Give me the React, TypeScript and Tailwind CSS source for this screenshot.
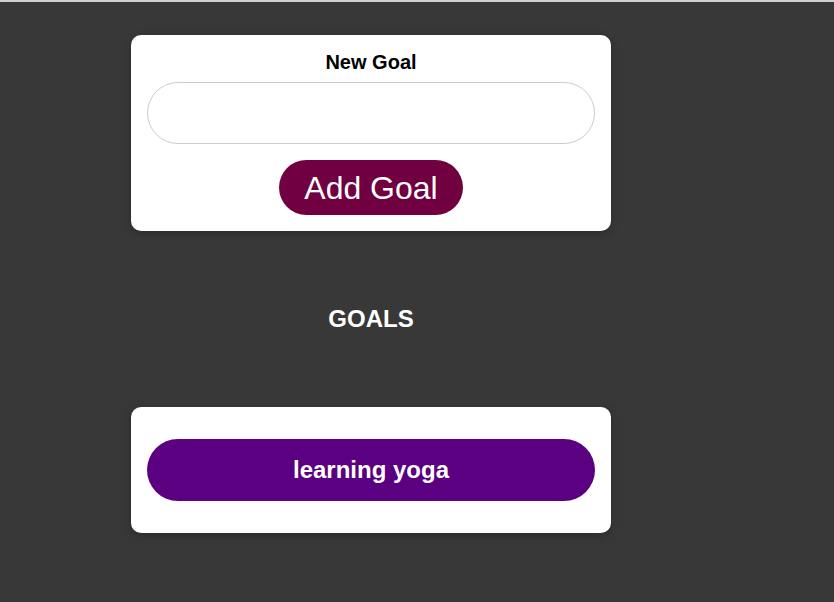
import { useState } from 'react';

export default function App() {
  const [goals] = useState([{ id: 'g1', text: 'learning yoga' }]);
  const [value, setValue] = useState('');

  return (
    <div className="min-h-[602px] bg-[#383838] border-t-2 border-[#d0d0d0] font-['Liberation_Sans',Arial,sans-serif]">
      <div className="w-[480px] ml-[131px] pt-[33px]">
        <form
          className="bg-white rounded-[10px] p-4 flex flex-col items-center shadow-[0_2px_8px_rgba(0,0,0,0.26)]"
          onSubmit={(e) => e.preventDefault()}
        >
          <label className="text-[20px] leading-[23px] font-bold text-black mb-2">New Goal</label>
          <input
            type="text"
            value={value}
            onChange={(e) => setValue(e.target.value)}
            className="w-full h-[62px] rounded-full border border-[#ccc] px-6 text-[20px] outline-none"
          />
          <button
            type="submit"
            className="mt-4 h-[55px] w-[184px] rounded-full bg-[#700040] text-white text-[32px]"
          >
            Add Goal
          </button>
        </form>

        <h2 className="my-[74px] text-center text-white text-[24px] font-bold leading-[28px]">
          GOALS
        </h2>

        <ul className="bg-white rounded-[10px] py-8 px-4 shadow-[0_2px_8px_rgba(0,0,0,0.26)]">
          {goals.map((goal) => (
            <li
              key={goal.id}
              className="h-[62px] rounded-full bg-[#5a0080] text-white text-[24px] font-bold flex items-center justify-center"
            >
              {goal.text}
            </li>
          ))}
        </ul>
      </div>
    </div>
  );
}
